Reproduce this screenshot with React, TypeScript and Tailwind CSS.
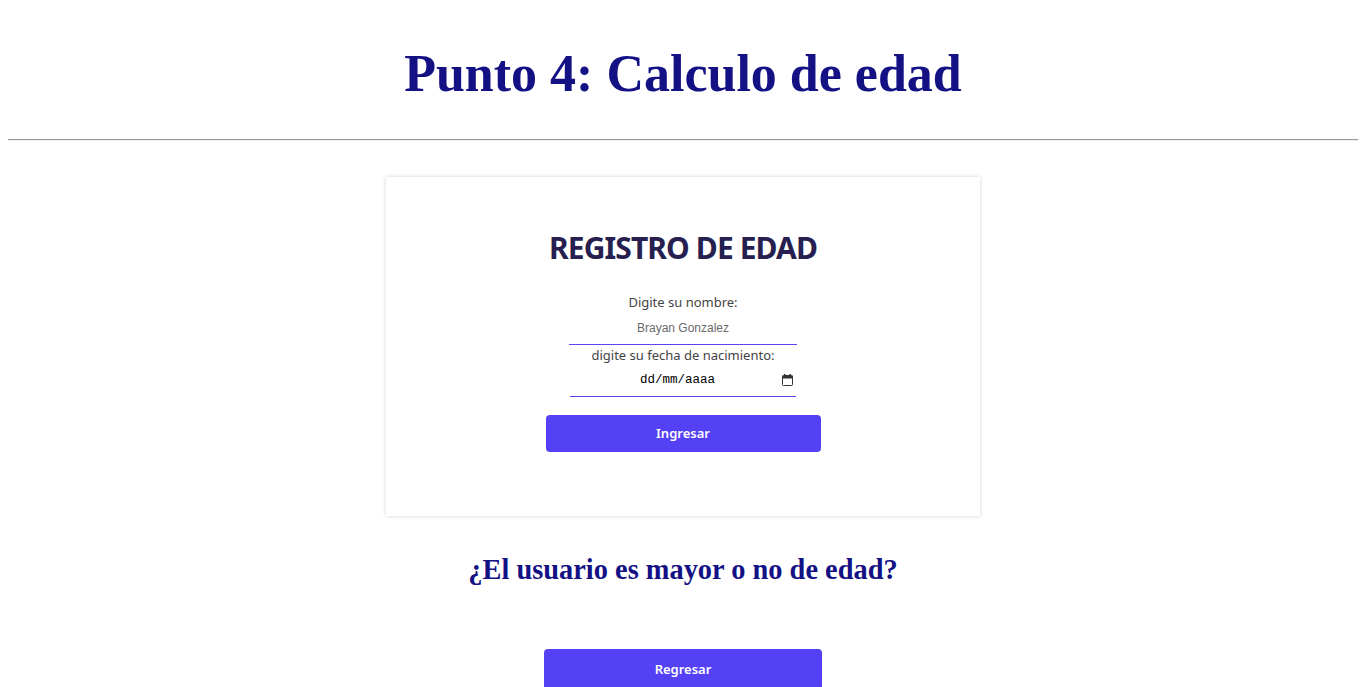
import React from "react";

function CalendarIcon() {
  return (
    <svg width="11" height="12" viewBox="0 0 11 12" className="block">
      <rect x="0.5" y="1.5" width="10" height="10" rx="1" fill="none" stroke="#333" strokeWidth="1" />
      <rect x="0.5" y="1.5" width="10" height="3" fill="#333" />
      <rect x="2" y="0" width="1.5" height="2" fill="#333" />
      <rect x="7.5" y="0" width="1.5" height="2" fill="#333" />
    </svg>
  );
}

export default function App() {
  return (
    <div className="min-h-screen bg-white px-2 font-['Liberation_Serif',serif]">
      <h1 className="pt-[44px] pb-[35px] text-center text-[52px] font-bold leading-[60px] text-[#141185]">
        Punto 4: Calculo de edad
      </h1>
      <div className="h-[2px] border-t border-[#9a9a9a] bg-[#eeeeee]" />
      <div className="mt-[36px] flex justify-center">
        <div className="flex h-[339px] w-[594px] flex-col items-center bg-white pt-[53px] shadow-[0_0_4px_rgba(0,0,0,0.18)] font-['Noto_Sans',sans-serif]">
          <h2 className="text-[30px] font-bold leading-[36px] tracking-[-0.9px] text-[#261f4f]">
            REGISTRO DE EDAD
          </h2>
          <label className="mt-[27px] text-[13px] leading-[18px] text-[#444]">Digite su nombre:</label>
          <input
            type="text"
            defaultValue="Brayan Gonzalez"
            className="h-[34px] w-[228px] border-b border-[#5846f0] text-center font-['Liberation_Sans',sans-serif] text-[12px] text-[#6b6b6b] outline-none"
          />
          <label className="mt-[1px] text-[13px] leading-[18px] text-[#444]">digite su fecha de nacimiento:</label>
          <div className="flex h-[33px] w-[226px] items-center border-b border-[#5846f0]">
            <span className="flex-1 pl-[3px] text-center font-['Liberation_Mono',monospace] text-[12.5px] text-black">
              dd/mm/aaaa
            </span>
            <span className="pr-[3px]">
              <CalendarIcon />
            </span>
          </div>
          <button className="mt-[18px] h-[37px] w-[275px] rounded-[4px] bg-[#5541f5] text-[13px] font-semibold text-white">
            Ingresar
          </button>
        </div>
      </div>
      <h3 className="mt-[36px] text-center text-[28.4px] font-bold leading-[36px] text-[#141185]">
        ¿El usuario es mayor o no de edad?
      </h3>
      <div className="mt-[61px] flex justify-center">
        <button className="h-[41px] w-[278px] rounded-[4px] bg-[#5541f5] font-['Noto_Sans',sans-serif] text-[13px] font-semibold text-white">
          Regresar
        </button>
      </div>
    </div>
  );
}
